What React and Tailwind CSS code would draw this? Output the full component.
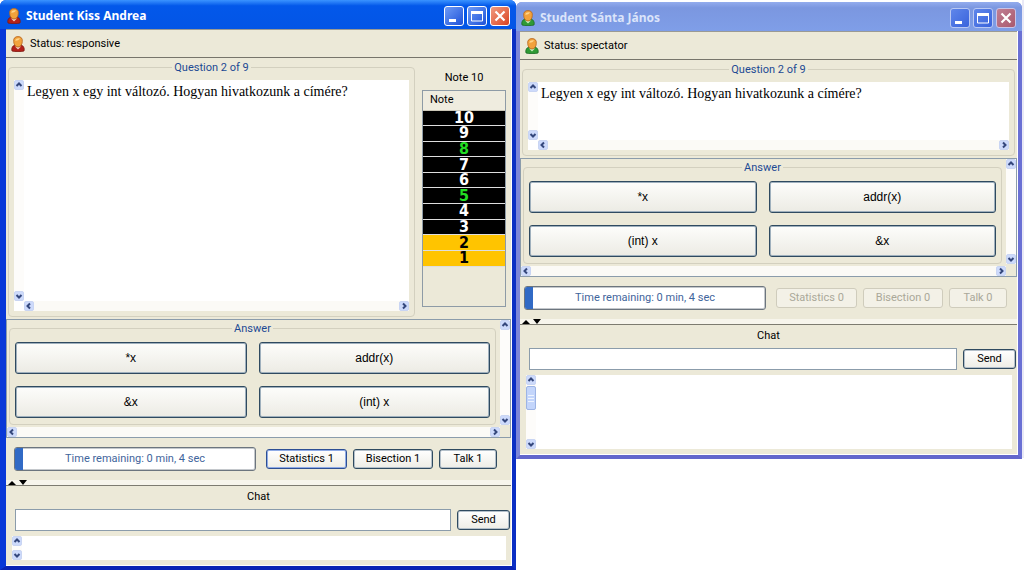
import clsx from 'clsx';

const students = [
  {
    id: 'andrea',
    name: 'Kiss Andrea',
    status: 'responsive',
    active: true,
    answers: ['*x', 'addr(x)', '&x', '(int) x'],
    helps: 1,
    note: 10,
  },
  {
    id: 'janos',
    name: 'Sánta János',
    status: 'spectator',
    active: false,
    answers: ['*x', 'addr(x)', '(int) x', '&x'],
    helps: 0,
  },
];

const notes = [10, 9, 8, 7, 6, 5, 4, 3, 2, 1];
const milestones = [8, 5];

const PersonIcon = ({ spectator }) => (
  <svg className="size-4 shrink-0" viewBox="0 0 16 16" aria-hidden="true">
    <path
      d="M2 15c-.9-3 .8-5.500 3-6h6c2.200.5 3.900 3 3 6-2.500.9-9.500.9-12 0z"
      fill={spectator ? '#2f9a35' : '#b3211a'}
      stroke={spectator ? '#1c6b25' : '#7d1a14'}
      strokeWidth=".8"
    />
    <path d="M5 10.500 8 13.500l3-3z" fill={spectator ? '#c9f0c0' : '#f5cfc0'} />
    <path
      d="M3.700 5.500C3.300 2 5.300.6 8 .6S12.700 2 12.300 5.500C12.200 8.500 10.500 11 8 11S3.800 8.500 3.700 5.500z"
      fill="#f2a23c"
      stroke="#b5651d"
      strokeWidth=".8"
    />
    <path d="M5.200 4.600C5.700 2.500 8 1.800 10 2.400 8.800 4.200 7 4.800 5.200 4.600z" fill="#ffd58a" />
  </svg>
);

const arrows = {
  up: 'M2.500 6 5 3.500 7.500 6',
  down: 'M2.500 4 5 6.500 7.500 4',
  left: 'M6 2.500 3.500 5 6 7.500',
  right: 'M4 2.500 6.500 5 4 7.500',
};

const ScrollButton = ({ direction }) => (
  <button
    type="button"
    aria-label={`Scroll ${direction}`}
    className="size-2.5 shrink-0 rounded-xs border border-[#c9d5f3] bg-[#cddafb]"
  >
    <svg className="-m-px size-2.5" viewBox="0 0 10 10" fill="none">
      <path d={arrows[direction]} stroke="#34477c" strokeWidth="2" />
    </svg>
  </button>
);

const VerticalScroll = ({ thumb }) => (
  <div className="flex w-2.5 shrink-0 flex-col justify-between bg-[#fdfcfa]">
    <ScrollButton direction="up" />
    {thumb && (
      <div className="mt-px mb-auto flex h-6 flex-col items-center justify-center gap-0.5 rounded-xs border border-[#9db4e4] bg-[#c3d5fb]">
        <span className="h-px w-1.5 bg-[#eef4fe]" />
        <span className="h-px w-1.5 bg-[#eef4fe]" />
        <span className="h-px w-1.5 bg-[#eef4fe]" />
      </div>
    )}
    <ScrollButton direction="down" />
  </div>
);

const HorizontalScroll = ({ className }) => (
  <div className={clsx('flex h-2.5 shrink-0 justify-between bg-[#fbfaf6]', className)}>
    <ScrollButton direction="left" />
    <ScrollButton direction="right" />
  </div>
);

const TitleBar = ({ name, active }) => {
  const control = clsx(
    'flex size-5 items-center justify-center rounded-[3px] border',
    active
      ? 'border-white bg-linear-to-br from-[#6f9bf5] to-[#1f4fd8]'
      : 'border-[#b9c8f3] bg-linear-to-br from-[#5f86ea] to-[#3a63dc]'
  );

  return (
    <header
      className={clsx(
        'flex h-[29px] shrink-0 items-center rounded-t-md pr-1.5 pt-0.5',
        active
          ? 'bg-linear-to-b from-[#3a93ff] via-[#0358ea] via-20% to-[#0355e6] pl-1.5'
          : 'bg-linear-to-b from-[#93acee] via-[#7b97e0] via-20% to-[#7f9ee8] pl-1'
      )}
    >
      <PersonIcon spectator={!active} />
      <h1
        className={clsx(
          'ml-1 flex-1 truncate font-["Noto_Sans",sans-serif] text-[12px] leading-4 font-bold',
          active ? 'text-white' : 'text-[#dbe4fa]'
        )}
      >
        Student {name}
      </h1>
      <div className="flex gap-[3px]">
        <button type="button" aria-label="Minimize" className={control}>
          <svg className="size-4" viewBox="0 0 16 16">
            <path d="M3 11h7v3H3z" fill="#fff" />
          </svg>
        </button>
        <button type="button" aria-label="Maximize" className={control}>
          <svg className="size-4" viewBox="0 0 16 16">
            <path d="M2.500 3.500h11v9.500h-11z" fill="none" stroke="#fff" />
            <path d="M2 3h12v3H2z" fill="#fff" />
          </svg>
        </button>
        <button
          type="button"
          aria-label="Close"
          className={clsx(
            'flex size-5 items-center justify-center rounded-[3px] border',
            active
              ? 'border-white bg-linear-to-br from-[#f09a80] to-[#d8401c]'
              : 'border-[#c9c3e6] bg-linear-to-br from-[#c07f93] to-[#a9596f]'
          )}
        >
          <svg className="size-4" viewBox="0 0 16 16">
            <path d="m3.500 3.500 9 9m0-9-9 9" stroke="#fff" strokeWidth="2.200" />
          </svg>
        </button>
      </div>
    </header>
  );
};

const GroupBox = ({ title, className, children }) => (
  <fieldset className={clsx('min-w-0 rounded-sm border border-[#d3d0bf] px-[5px]', className)}>
    <legend className="mx-auto px-0.5 pt-0.5 text-[11px] leading-[14px] text-[#1c4a94]">{title}</legend>
    {children}
  </fieldset>
);

const Question = ({ tall }) => (
  <GroupBox title="Question 2 of 9" className={clsx('flex flex-1 flex-col pb-[5px]', tall && 'min-h-60')}>
    <div className={clsx('mt-[5px] flex flex-col bg-white', tall ? 'h-full' : 'h-[68px]')}>
      <div className="flex flex-1">
        <VerticalScroll />
        <p className="px-[3px] pt-1 font-['Liberation_Serif',serif] text-[14px] leading-4 text-black">
          Legyen x egy int változó. Hogyan hivatkozunk a címére?
        </p>
      </div>
      <HorizontalScroll className="ml-2.5" />
    </div>
  </GroupBox>
);

const NoteTable = ({ note }) => (
  <div className="mr-[3px] mb-2.5 ml-[7px] flex w-[84px] shrink-0 flex-col pt-[11px]">
    <p className="mb-1 text-center text-[11px] leading-4">Note {note}</p>
    <div className="flex-1 border border-[#8e9ba6]">
      <table className="w-full border-collapse">
        <thead>
          <tr className="h-[19px] border-b border-[#cbc7b8] bg-[#efecdf]">
            <th className="px-[7px] text-left text-[11px] leading-4 font-normal">Note</th>
          </tr>
        </thead>
      </table>
      <table className="h-[156px] w-full border-collapse" aria-label="Note">
        <tbody>
          {notes.map((n) => (
            <tr
              key={n}
              className={clsx(
                'border-b border-[#dedede]',
                n <= 2 && 'bg-[#ffc400] text-black',
                n > 2 && 'bg-black',
                n > 2 && (milestones.includes(n) ? 'text-[#22dd22]' : 'text-white')
              )}
            >
              <td className='text-center font-["DejaVu_Sans_Condensed","DejaVu_Sans",sans-serif] text-[16px] leading-[14px] font-bold'>
                {n}
              </td>
            </tr>
          ))}
        </tbody>
      </table>
    </div>
  </div>
);

const Answers = ({ answers }) => (
  <section className="flex flex-col border border-[#8b9cab]">
    <div className="flex">
      <GroupBox title="Answer" className="mr-1 ml-0.5 flex-1 pb-1.5">
        <div className="mt-1.5 grid grid-cols-2 gap-3">
          {answers.map((answer) => (
            <button
              key={answer}
              type="button"
              className="h-8 rounded-[3px] border border-[#2f4a60] bg-linear-to-b from-[#fdfdfb] to-[#ecebe4] font-['Liberation_Sans',sans-serif] text-[12px] leading-4 text-black inset-ring inset-ring-[#9fb0bd]"
            >
              {answer}
            </button>
          ))}
        </div>
      </GroupBox>
      <VerticalScroll />
    </div>
    <HorizontalScroll className="mt-0.5 mr-2.5" />
  </section>
);

const HelpButton = ({ disabled, focused, className, children }) => (
  <button
    type="button"
    disabled={disabled}
    className={clsx(
      'h-5 rounded-[3px] border text-[11px] leading-4',
      disabled && 'border-[#cfccbc] bg-[#f3f1e7] text-[#aaa899]',
      !disabled && 'bg-linear-to-b from-white to-[#eeede6] text-black inset-ring',
      !disabled && (focused ? 'border-[#2d4f94] inset-ring-[#8fabe6]' : 'border-[#2f4a60] inset-ring-[#b4c0ca]'),
      className
    )}
  >
    {children}
  </button>
);

const ActionRow = ({ helps }) => (
  <div className="flex items-center justify-center py-[9px] pr-1.5">
    <div
      role="progressbar"
      aria-label="Time remaining"
      aria-valuenow={3}
      className="relative mr-2.5 flex h-6 w-[242px] items-center justify-center overflow-hidden rounded-[3px] border border-[#6c757e] bg-white inset-ring inset-ring-[#c4c8cc]"
    >
      <div className="absolute inset-y-0 left-0 bg-[#316ac5]" style={{ width: '3.4%' }} />
      <span className="text-[11px] leading-4 text-[#3f659c]">Time remaining: 0 min, 4 sec</span>
    </div>
    <div className="flex gap-1.5">
      <HelpButton disabled={!helps} focused className="w-[81px]">
        Statistics {helps}
      </HelpButton>
      <HelpButton disabled={!helps} className="w-[80px]">
        Bisection {helps}
      </HelpButton>
      <HelpButton disabled={!helps} className="w-[58px]">
        Talk {helps}
      </HelpButton>
    </div>
  </div>
);

const Splitter = () => (
  <div className="h-1.5 border-b border-[#7d7b70] bg-[#f7f5ec]">
    <svg className="ml-0.5 h-[5px] w-5" viewBox="0 0 20 5" aria-hidden="true">
      <path d="M0 5 4 1l4 4zM11 0h8l-4 5z" fill="#000" />
    </svg>
  </div>
);

const Chat = ({ id, large }) => (
  <section className="flex flex-col pb-[5px]">
    <label htmlFor={`chat-${id}`} className="mb-1 pt-[3px] text-center text-[11px] leading-4">
      Chat
    </label>
    <div className="flex items-center gap-1.5 pr-px pl-[9px]">
      <input
        id={`chat-${id}`}
        type="text"
        className="h-[22px] min-w-0 flex-1 border border-[#8b9cab] bg-white px-1 text-[11px]"
      />
      <HelpButton className="w-[53px]">Send</HelpButton>
    </div>
    <div className={clsx('mt-[5px] mr-[5px] ml-1.5 flex bg-white', large ? 'h-[74px]' : 'h-6')}>
      <VerticalScroll thumb={large} />
      <textarea readOnly aria-label="Chat messages" className="flex-1 resize-none text-[11px]" />
    </div>
  </section>
);

const StudentWindow = ({ student }) => {
  const { id, name, status, active, answers, helps, note } = student;

  return (
    <main
      className={clsx(
        'flex flex-col rounded-t-md',
        active ? 'min-h-screen bg-[#0a3fdb]' : 'mt-0.5 self-start bg-[#7480d8]'
      )}
    >
      <TitleBar name={name} active={active} />
      <div
        className={clsx(
          'flex flex-1 flex-col border-r-4 border-b-4',
          active
            ? 'border-l-[6px] border-r-[#0b2fc4] border-b-[#0a24b4] border-l-[#0838d8]'
            : 'border-l-4 border-r-[#6a70d4] border-b-[#6266cc] border-l-[#7d86d8]'
        )}
      >
        <div className="flex flex-1 flex-col border-r border-b border-white bg-[#ece9d8]">
          <div className="flex h-[29px] items-center border-t border-b border-t-[#9a9a94] border-b-[#77756b] pl-1">
            <PersonIcon spectator={!active} />
            <p className="ml-1 text-[11px] leading-4">Status: {status}</p>
          </div>
          <div className="flex flex-1 px-0.5 pt-px pb-0.5">
            <Question tall={active} />
            {note && <NoteTable note={note} />}
          </div>
          <Answers answers={answers} />
          <ActionRow helps={helps} />
          <Splitter />
          <Chat id={id} large={!active} />
        </div>
      </div>
    </main>
  );
};

function App() {
  return (
    <div className="grid min-h-screen grid-cols-[516fr_506fr_2fr] bg-white font-['Roboto',sans-serif] text-black">
      {students.map((student) => (
        <StudentWindow key={student.id} student={student} />
      ))}
      <div className="h-[458px] bg-[#e9e9f6]" />
    </div>
  );
}

export default App;
